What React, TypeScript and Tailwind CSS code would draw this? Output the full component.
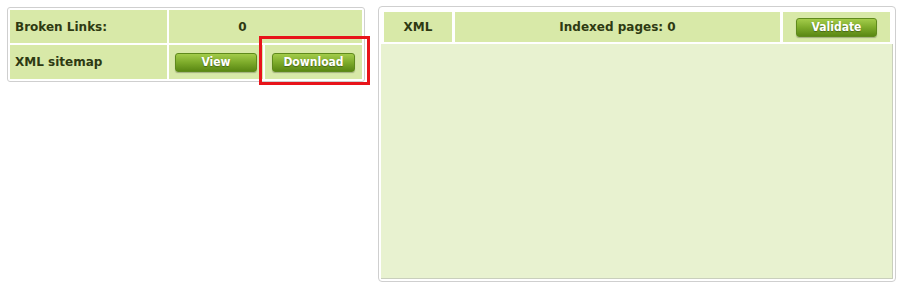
const font = { fontFamily: '"DejaVu Sans", Verdana, sans-serif' };
const btnFont = { fontFamily: '"DejaVu Sans Condensed", "DejaVu Sans", Tahoma, sans-serif', fontStretch: "condensed" as const };

function GreenButton({ label, className }: { label: string; className?: string }) {
  return (
    <button
      type="button"
      style={btnFont}
      className={`flex h-[19px] items-center justify-center rounded-[3px] border border-[#5f8a1c] bg-gradient-to-b from-[#a3cc4a] via-[#7dab2a] to-[#5a8813] text-[12px] font-bold text-white shadow-[0_1px_1px_rgba(0,0,0,0.25)] [text-shadow:0_1px_1px_rgba(0,0,0,0.35)] ${className ?? ""}`}
    >
      {label}
    </button>
  );
}

export default function App() {
  return (
    <div className="flex min-h-[290px] items-start bg-white text-[12px] text-[#2e3a12]" style={font}>
      {/* left summary */}
      <div className="relative ml-[7px] mt-[7px] w-[358px] rounded-[3px] border border-[#cfcfcf] bg-white p-[2px]">
        <div className="grid grid-cols-[157px_94px_1fr] gap-[2px]">
          <div className="flex h-[33px] items-center bg-[#d8e9a8] pl-[5px] font-bold">Broken Links:</div>
          <div className="col-span-2 flex h-[33px] items-center justify-center bg-[#d8e9a8] pr-[46px] font-bold">0</div>
          <div className="flex h-[34px] items-center bg-[#d8e9a8] pl-[5px] font-bold">XML sitemap</div>
          <div className="flex h-[34px] items-center justify-center bg-[#d8e9a8]">
            <GreenButton label="View" className="w-[82px]" />
          </div>
          <div className="flex h-[34px] items-center justify-center bg-[#d8e9a8]">
            <GreenButton label="Download" className="w-[83px]" />
          </div>
        </div>
        <div className="pointer-events-none absolute left-[251px] top-[28px] h-[49px] w-[111px] border-[3px] border-[#e8141a]" />
      </div>

      {/* right validator */}
      <div className="ml-[13px] mt-[6px] flex h-[276px] w-[518px] flex-col rounded-[4px] border border-[#cfcfcf] bg-white p-[2px]">
        <div className="flex gap-[3px] px-[3px] pt-[3px]">
          <div className="flex h-[30px] w-[68px] items-center justify-center bg-[#d8e9a8] font-bold">XML</div>
          <div className="flex h-[30px] flex-1 items-center justify-center bg-[#d8e9a8] font-bold">Indexed pages: 0</div>
          <div className="flex h-[30px] w-[107px] items-center justify-center bg-[#d8e9a8]">
            <GreenButton label="Validate" className="w-[81px]" />
          </div>
        </div>
        <div className="mt-[2px] flex-1 border-b border-r border-[#c9cfbd] bg-[#e8f2d0]" />
      </div>
    </div>
  );
}
